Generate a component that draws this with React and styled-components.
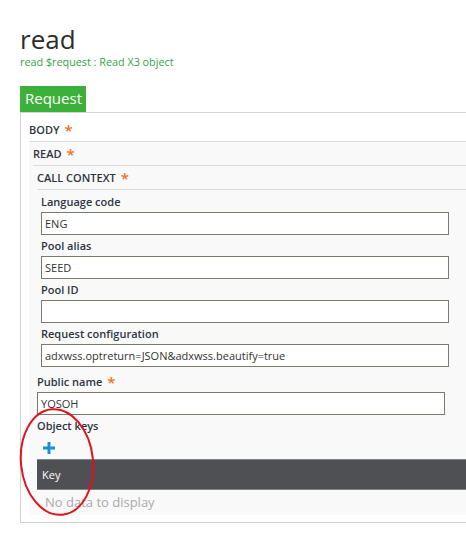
import React from 'react';
import styled, { createGlobalStyle } from 'styled-components';

const GlobalStyle = createGlobalStyle`
  html, body {
    margin: 0;
    padding: 0;
    background: #fff;
    overflow: hidden;
  }
  body {
    font-family: "Open Sans", "Noto Sans", sans-serif;
    color: #333;
  }
`;

const Page = styled.div`
  position: relative;
  width: 560px;
  padding: 23px 0 0 20px;
`;

const Title = styled.h1`
  margin: 0;
  font-size: 26px;
  line-height: 32px;
  font-weight: 400;
  color: #2d2d2d;
`;

const Subtitle = styled.div`
  font-size: 10.8px;
  line-height: 14px;
  color: #33a543;
`;

const TabBar = styled.div`
  display: flex;
  margin-top: 17px;
`;

const Tab = styled.div`
  height: 26px;
  line-height: 25px;
  padding: 0 4px 0 5px;
  background: #3bb13a;
  color: #fff;
  font-size: 15px;
`;

const Panel = styled.div`
  width: 520px;
  border: 1px solid #d2d2d2;
  padding: 5px 0 7px 8px;
`;

const SectionHeader = styled.div`
  height: 23px;
  line-height: 23px;
  font-size: 11px;
  font-weight: 600;
  color: #2f3540;
  border-bottom: 1px solid #dcdcdc;
`;

const Star = styled.span`
  margin-left: 5px;
  color: #f4711f;
  font-size: 15px;
  font-weight: 600;
  vertical-align: -2px;
`;

const SectionBody = styled.div`
  background: #f9f9f9;
  padding: ${(p) => p.$pt || 0}px 0 ${(p) => p.$pb || 0}px 4px;
`;

const Label = styled.div`
  height: 21px;
  line-height: 21px;
  font-size: 11px;
  font-weight: 600;
  color: #2f3540;
`;

const Input = styled.div`
  box-sizing: border-box;
  width: 408px;
  height: 23px;
  line-height: 21px;
  padding: 0 3px;
  background: #fff;
  border: 1px solid #747d70;
  font-size: 11px;
  color: #333;
  white-space: nowrap;
  overflow: hidden;
`;

const Toolbar = styled.div`
  display: flex;
  align-items: center;
  height: 23px;
  padding-left: 6px;
`;

const GridHeader = styled.div`
  height: 29px;
  line-height: 29px;
  padding-left: 5px;
  background: #4f5054;
  border-top: 1px solid #80867f;
  border-bottom: 1px solid #80867f;
  color: #fff;
  font-size: 11px;
`;

const EmptyRow = styled.div`
  height: 25px;
  line-height: 25px;
  padding-left: 8px;
  color: #aaa;
  font-size: 13px;
`;

const Annotation = styled.svg`
  position: absolute;
  left: 19px;
  top: 407px;
  overflow: visible;
`;

function Section({ title, children, pt, pb }) {
  return (
    <section>
      <SectionHeader>
        {title}
        <Star>*</Star>
      </SectionHeader>
      <SectionBody $pt={pt} $pb={pb}>
        {children}
      </SectionBody>
    </section>
  );
}

function Field({ label, value, required }) {
  return (
    <>
      <Label>
        {label}
        {required && <Star>*</Star>}
      </Label>
      <Input>{value}</Input>
    </>
  );
}

const contextFields = [
  { label: 'Language code', value: 'ENG' },
  { label: 'Pool alias', value: 'SEED' },
  { label: 'Pool ID', value: '' },
  { label: 'Request configuration', value: 'adxwss.optreturn=JSON&adxwss.beautify=true' },
];

export default function App() {
  return (
    <Page>
      <GlobalStyle />
      <Title>read</Title>
      <Subtitle>read $request : Read X3 object</Subtitle>
      <TabBar>
        <Tab>Request</Tab>
      </TabBar>
      <Panel>
        <Section title="BODY">
          <Section title="READ">
            <Section title="CALL CONTEXT" pt={1} pb={4}>
              {contextFields.map((f) => (
                <Field key={f.label} label={f.label} value={f.value} />
              ))}
            </Section>
            <Field label="Public name" value="YOSOH" required />
            <Label>Object keys</Label>
            <Toolbar>
              <svg width="12" height="12" viewBox="0 0 12 12">
                <rect x="4.5" y="0" width="3" height="12" fill="#1a8fd8" />
                <rect x="0" y="4.5" width="12" height="3" fill="#1a8fd8" />
              </svg>
            </Toolbar>
            <GridHeader>Key</GridHeader>
            <EmptyRow>No data to display</EmptyRow>
          </Section>
        </Section>
      </Panel>
      <Annotation width="76" height="110" viewBox="0 0 76 110">
        <ellipse
          cx="38"
          cy="55"
          rx="36"
          ry="53"
          transform="rotate(-6 38 55)"
          fill="none"
          stroke="#e3111b"
          strokeWidth="2"
        />
      </Annotation>
    </Page>
  );
}
